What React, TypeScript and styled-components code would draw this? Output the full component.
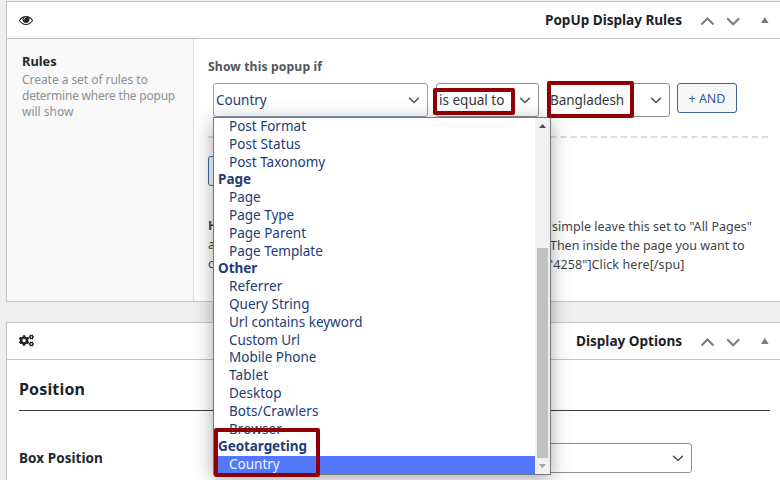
import React from "react";
import styled, { createGlobalStyle } from "styled-components";
import { FaCogs } from "react-icons/fa";

const Global = createGlobalStyle`
  * { box-sizing: border-box; }
  body { margin: 0; background: #efeff0; overflow: hidden; }
`;

const Page = styled.main`
  position: relative;
  width: 780px;
  height: 480px;
  overflow: hidden;
  padding: 1px 0 0 6px;
  display: flex;
  flex-direction: column;
  gap: 20px;
  background: #efeff0;
  font-family: "Noto Sans", "Open Sans", sans-serif;
  font-size: 13px;
  color: #3c434a;
`;

const Panel = styled.section<{ $height: number }>`
  flex: none;
  height: ${(p) => p.$height}px;
  display: flex;
  flex-direction: column;
  background: #fff;
  border: 1px solid #c3c4c7;
  border-right: 0;
`;

const PanelHeader = styled.header`
  flex: none;
  height: 37px;
  display: flex;
  align-items: center;
  padding: 0 10px 1px 12px;
  border-bottom: 1px solid #c3c4c7;
  color: #1d2327;
`;

const PanelIcon = styled.span`
  display: flex;
  margin-right: auto;
`;

const Text = styled.span<{ $size: number; $track?: number; $bold?: boolean; $color?: string }>`
  white-space: nowrap;
  font-size: ${(p) => p.$size}px;
  letter-spacing: ${(p) => p.$track ?? 0}px;
  font-weight: ${(p) => (p.$bold ? 700 : 400)};
  color: ${(p) => p.$color ?? "inherit"};
`;

const HeaderActions = styled.div`
  display: flex;
  align-items: center;
  margin-left: 18px;
  svg { display: block; }
`;

const RulesBody = styled.div`
  flex: 1;
  display: flex;
`;

const Aside = styled.div`
  width: 187px;
  padding: 15px 0 0 15px;
  background: #f9f9f9;
  border-right: 1px solid #dfdfdf;
  display: flex;
  flex-direction: column;
  line-height: 16px;
`;

const AsideTitle = styled.div`
  height: 18px;
  line-height: 15px;
  color: #23282d;
`;

const RulesMain = styled.div`
  flex: 1;
  display: flex;
  flex-direction: column;
  padding: 18px 12px 0 14px;
`;

const FieldLabel = styled.div`
  height: 26px;
  line-height: 18px;
  color: #50575e;
`;

const RuleRow = styled.div`
  display: flex;
  height: 55px;
  padding-left: 5px;
  border-bottom: 2px dashed #dcdcde;
`;

const Select = styled.div<{ $w: number; $h?: number; $ml?: number; $focus?: boolean; $pl?: number }>`
  flex: none;
  display: flex;
  align-items: center;
  justify-content: space-between;
  width: ${(p) => p.$w}px;
  height: ${(p) => p.$h ?? 34}px;
  margin-left: ${(p) => p.$ml ?? 0}px;
  padding: 0 7px 0 ${(p) => p.$pl ?? 2}px;
  border: 1px solid ${(p) => (p.$focus ? "#8ba0b8" : "#8c8f94")};
  border-radius: 3px;
  background: #fff;
  color: ${(p) => (p.$focus ? "#213c78" : "#32373c")};
`;

const Button = styled.button<{ $w: number; $ml?: number }>`
  flex: none;
  width: ${(p) => p.$w}px;
  height: 30px;
  margin-left: ${(p) => p.$ml ?? 0}px;
  padding: 0;
  border: 1px solid #3a62a8;
  border-radius: 3px;
  background: #f6f7f7;
  color: #3559a0;
  font-family: inherit;
`;

const OrRow = styled.div`
  height: 49px;
  padding-top: 18px;
`;

const Help = styled.div`
  margin-top: 29px;
  display: grid;
  grid-template-columns: 335px 1fr;
  grid-auto-rows: 19px;
  line-height: 20px;
`;

const HelpEnd = styled.div<{ $pl?: number }>`
  padding-left: ${(p) => p.$pl ?? 0}px;
  white-space: nowrap;
`;

const OptionsBody = styled.div`
  padding: 12px 10px 0 12px;
  display: flex;
  flex-direction: column;
`;

const SectionTitle = styled.h3`
  margin: 0;
  height: 39px;
  line-height: 34px;
  border-bottom: 1px solid #3c3c40;
  color: #1d2327;
`;

const OptionRow = styled.div`
  display: flex;
  align-items: center;
  justify-content: space-between;
  padding: 32px 78px 0 0;
  color: #23282d;
`;

const Dropdown = styled.div`
  position: absolute;
  left: 213px;
  top: 117px;
  width: 338px;
  height: 358px;
  display: flex;
  border: 1px solid #75777a;
  background: #fff;
  box-shadow: 0 4px 18px rgba(0, 0, 0, 0.34);
`;

const OptionList = styled.div`
  width: 321px;
  display: grid;
  grid-template-rows: repeat(20, 17.8px);
  color: #213c78;
`;

const Option = styled.div<{ $group?: boolean; $selected?: boolean }>`
  padding-left: ${(p) => (p.$group ? 4 : 15)}px;
  line-height: 16.7px;
  background: ${(p) => (p.$selected ? "#5278ff" : "transparent")};
  color: ${(p) => (p.$selected ? "#f0f4ff" : "inherit")};
`;

const ScrollTrack = styled.div`
  flex: 1;
  display: flex;
  flex-direction: column;
  align-items: center;
  justify-content: space-between;
  background: #f0f0f0;
  svg { display: block; margin: 6px 0; }
`;

const Thumb = styled.div`
  width: 11px;
  height: 210px;
  margin-top: auto;
  background: #c1c1c1;
`;

const Highlight = styled.div<{ $x: number; $y: number; $w: number; $h: number }>`
  position: absolute;
  left: ${(p) => p.$x}px;
  top: ${(p) => p.$y}px;
  width: ${(p) => p.$w}px;
  height: ${(p) => p.$h}px;
  border: 4px solid #8e0004;
  border-radius: 2px;
`;

const Eye = () => (
  <svg width="14" height="14" viewBox="0 0 1792 1792" fill="currentColor">
    <path d="M1664 960q-152-236-381-353 61 104 61 225 0 185-131.5 316.5t-316.5 131.5-316.5-131.5-131.5-316.5q0-121 61-225-229 117-381 353 133 205 333.5 326.5t434.5 121.5 434.5-121.5 333.5-326.5zm-720-384q0-20-14-34t-34-14q-125 0-214.5 89.5t-89.5 214.5q0 20 14 34t34 14 34-14 14-34q0-86 61-147t147-61q20 0 34-14t14-34zm848 384q0 34-20 69-140 230-376.5 368.5t-499.5 138.5-499.5-139-376.5-368q-20-35-20-69t20-69q140-229 376.5-368t499.5-139 499.5 139 376.5 368q20 35 20 69z" />
  </svg>
);

const Chevron = () => (
  <svg width="12" height="8" viewBox="0 0 12 8" fill="none" stroke="#50575e" strokeWidth="1.5">
    <path d="M1.2 1.9 6 6.5l4.8-4.6" />
  </svg>
);

const Triangle = ({ down, color }: { down?: boolean; color: string }) => (
  <svg width="7" height="4" viewBox="0 0 8 6" preserveAspectRatio="none" fill={color}>
    <path d={down ? "M0 0h8L4 6z" : "M0 6h8L4 0z"} />
  </svg>
);

const Actions = () => (
  <HeaderActions>
    <svg width="70" height="12" viewBox="0 0 70 12" fill="none" stroke="#787c82" strokeWidth="2">
      <path d="m1.5 10.5 6-6 6 6M27.2 4.3l6 6 6-6" />
      <path d="M61 9h7.6L64.8 3z" fill="#787c82" stroke="none" />
    </svg>
  </HeaderActions>
);

type Item = { label: string; track?: number; group?: boolean; selected?: boolean };

const items: Item[] = [
  { label: "Post Format" },
  { label: "Post Status", track: 0.08 },
  { label: "Post Taxonomy" },
  { label: "Page", group: true },
  { label: "Page" },
  { label: "Page Type" },
  { label: "Page Parent" },
  { label: "Page Template" },
  { label: "Other", group: true },
  { label: "Referrer", track: 0.15 },
  { label: "Query String" },
  { label: "Url contains keyword" },
  { label: "Custom Url", track: -0.05 },
  { label: "Mobile Phone" },
  { label: "Tablet", track: 0.15 },
  { label: "Desktop" },
  { label: "Bots/Crawlers", track: 0.08 },
  { label: "Browser", track: 0.08 },
  { label: "Geotargeting", track: -0.08, group: true },
  { label: "Country", selected: true },
];

export default function App() {
  return (
    <>
      <Global />
      <Page>
        <Panel $height={301}>
          <PanelHeader>
            <PanelIcon><Eye /></PanelIcon>
            <Text $size={13.6} $bold $track={-0.03}>PopUp Display Rules</Text>
            <Actions />
          </PanelHeader>
          <RulesBody>
            <Aside>
              <AsideTitle><Text $size={12.8} $bold>Rules</Text></AsideTitle>
              <Text $size={12} $track={-0.05} $color="#8c8f94">Create a set of rules to</Text>
              <Text $size={12} $track={-0.22} $color="#8c8f94">determine where the popup</Text>
              <Text $size={12} $color="#8c8f94">will show</Text>
            </Aside>
            <RulesMain>
              <FieldLabel><Text $size={12.2} $bold $track={0.12}>Show this popup if</Text></FieldLabel>
              <RuleRow>
                <Select $w={215} $focus><Text $size={13.5}>Country</Text><Chevron /></Select>
                <Select $w={103} $ml={8}><Text $size={13.5}>is equal to</Text><Chevron /></Select>
                <Select $w={122} $ml={9} $pl={1}><Text $size={13.5} $track={-0.07}>Bangladesh</Text><Chevron /></Select>
                <Button $w={60} $ml={7}><Text $size={12.5}>+ AND</Text></Button>
              </RuleRow>
              <OrRow><Button $w={44} aria-label="OR" /></OrRow>
              <Help>
                <Text $size={12.5} $bold>H</Text>
                <HelpEnd $pl={9}><Text $size={12.5} $track={0.02}>simple leave this set to "All Pages"</Text></HelpEnd>
                <Text $size={12.5}>a</Text>
                <HelpEnd $pl={7}><Text $size={12.5} $track={-0.03}>Then inside the page you want to</Text></HelpEnd>
                <Text $size={12.5}>c</Text>
                <HelpEnd $pl={5}><Text $size={12.5} $track={0.1}>"4258"]Click here[/spu]</Text></HelpEnd>
              </Help>
            </RulesMain>
          </RulesBody>
        </Panel>
        <Panel $height={180}>
          <PanelHeader>
            <PanelIcon><FaCogs size={15} /></PanelIcon>
            <Text $size={13.6} $bold $track={-0.03}>Display Options</Text>
            <Actions />
          </PanelHeader>
          <OptionsBody>
            <SectionTitle><Text $size={16} $bold $track={0.15}>Position</Text></SectionTitle>
            <OptionRow>
              <Text $size={13.5} $bold $track={0.06}>Box Position</Text>
              <Select $w={380} $h={30}><span /><Chevron /></Select>
            </OptionRow>
          </OptionsBody>
        </Panel>
        <Dropdown>
          <OptionList>
            {items.map((item, i) => (
              <Option key={i} $group={item.group} $selected={item.selected}>
                <Text $size={13.5} $bold={item.group} $track={item.track}>{item.label}</Text>
              </Option>
            ))}
          </OptionList>
          <ScrollTrack>
            <Triangle color="#505050" />
            <Thumb />
            <Triangle down color="#a3a3a3" />
          </ScrollTrack>
        </Dropdown>
        <Highlight $x={433} $y={88} $w={82} $h={27} />
        <Highlight $x={547} $y={81} $w={87} $h={37} />
        <Highlight $x={214} $y={428} $w={106} $h={49} />
      </Page>
    </>
  );
}
